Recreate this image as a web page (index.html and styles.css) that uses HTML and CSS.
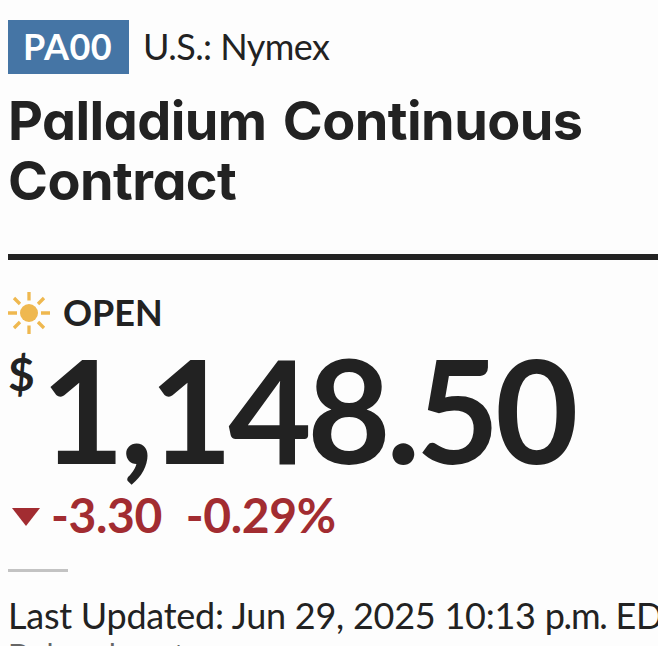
FILE: index.html
```html
<!DOCTYPE html>
<html lang="en">
<head>
    <meta charset="UTF-8">
    <meta name="viewport" content="width=device-width, initial-scale=1.0">
    <title>Palladium Continuous Contract</title>
    <link rel="stylesheet" href="styles.css">
</head>
<body>

    <div class="quote">
        <div class="company">
            <span class="ticker">PA00</span>
            <span class="exchange">U.S.: Nymex</span>
        </div>
        <h1 class="name">Palladium Continuous<br>Contract</h1>

        <div class="status">
            <svg class="sun" viewBox="0 0 42 42">
                <circle cx="21" cy="21" r="9" />
                <path d="M21 0v8.500M21 33.500v8.500M0 21h9M33 21h9M6 6l6 6M30 30l6 6M6 36l6-6M30 12l6-6" />
            </svg>
            <span class="status-text">OPEN</span>
        </div>

        <div class="price">
            <sup class="currency">$</sup>
            <span class="value">1,148.50</span>
        </div>

        <div class="change">
            <span class="arrow"></span>
            <span class="points">-3.30</span>
            <span class="percent">-0.29%</span>
        </div>

        <div class="divider"></div>
        <div class="timestamp">Last Updated: Jun 29, 2025 10:13 <span class="meridiem">p.m.</span> EDT</div>
        <div class="delay">Delayed quote</div>
    </div>

</body>
</html>
```
FILE: styles.css
```css
body {
    margin: 0;
    height: 646px;
    overflow: hidden;
    background-color: #fdfdfd;
    color: #222;
    font-family: Lato, sans-serif;
    white-space: nowrap;
}

.quote {
    height: 626px;
    padding: 20px 0 0 8px;
    overflow: hidden;
}

.company {
    display: flex;
    height: 54px;
    line-height: 52px;
    font-size: 36px;
}

.ticker {
    width: 106px;
    margin-right: 14px;
    padding-left: 15px;
    background-color: #4575a5;
    color: white;
    font-weight: bold;
    letter-spacing: 0.5px;
}

.exchange {
    letter-spacing: -0.55px;
}

.name {
    height: 186px;
    box-sizing: border-box;
    margin: 0;
    padding-top: 17px;
    border-bottom: 6px solid #222;
    font-family: Inter, Lato, sans-serif;
    font-feature-settings: "cv11";
    font-size: 54px;
    line-height: 60px;
    font-weight: bold;
    letter-spacing: -0.55px;
    word-spacing: 4px;
}

.status {
    display: flex;
    align-items: center;
    height: 42px;
    margin-top: 32px;
    font-size: 36px;
    line-height: 40px;
    font-weight: bold;
}

.status-text {
    padding-bottom: 2px;
}

.sun {
    width: 42px;
    height: 42px;
    margin-right: 13px;
    fill: #efb84f;
    stroke: #efb84f;
    stroke-width: 3.3;
}

.sun circle {
    stroke: none;
}

.price {
    display: flex;
    height: 140px;
    font-weight: bold;
}

.currency {
    width: 33px;
    padding-top: 11px;
    font-size: 46px;
    line-height: 58px;
    font-weight: bold;
}

.value {
    font-size: 144px;
    line-height: 150px;
    letter-spacing: -4.5px;
}

.change {
    display: flex;
    align-items: center;
    height: 60px;
    margin-top: 10px;
    color: #a22c31;
    font-size: 48px;
    font-weight: bold;
    letter-spacing: -0.4px;
}

.arrow {
    margin: 6px 11px 0 4px;
    border: 14px solid transparent;
    border-top: 18px solid #a22c31;
    border-bottom: 0;
}

.percent {
    margin-left: 24px;
}

.divider {
    width: 60px;
    height: 3px;
    margin-top: 25px;
    background-color: #c3c3c3;
}

.timestamp {
    margin-top: 23px;
    font-size: 36px;
    line-height: 40px;
    letter-spacing: -0.25px;
}

.meridiem {
    letter-spacing: -1.2px;
}

.delay {
    margin-top: 1px;
    font-size: 30px;
    line-height: 36px;
    color: #666;
}
```
